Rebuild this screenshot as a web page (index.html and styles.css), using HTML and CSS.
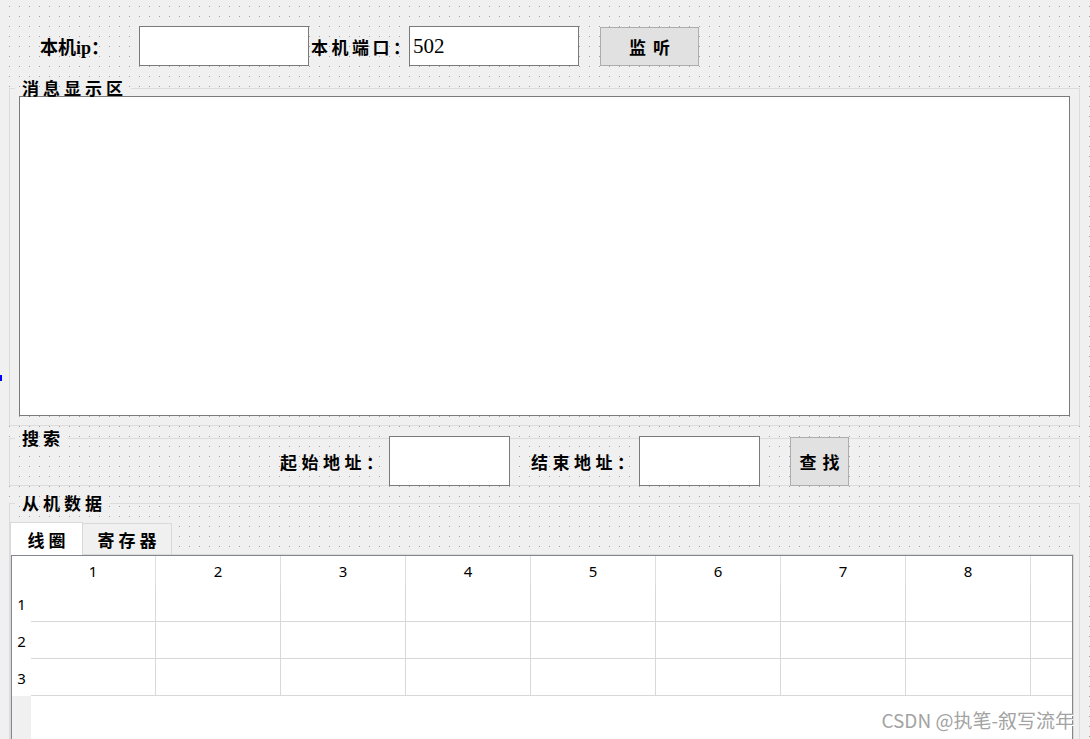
FILE: index.html
```html
<!DOCTYPE html>
<html>
<head>
  <meta charset="utf-8">
  <title>Modbus TCP 从机</title>
  <link rel="stylesheet" href="styles.css">
</head>
<body>
    <div class="top-row">
        <label class="ip-label">本机ip：</label>
        <input type="text" class="field wide">
        <label class="port-label">本机端口：</label>
        <input type="text" class="field wide" value="502">
        <button class="btn listen-btn">监听</button>
    </div>

    <fieldset class="group msg-group">
        <legend>消息显示区</legend>
        <textarea class="msg-box"></textarea>
    </fieldset>

    <fieldset class="group search-group">
        <legend>搜索</legend>
        <div class="search-row">
            <label class="addr-label">起始地址：</label>
            <input type="text" class="field short">
            <label class="addr-label end">结束地址：</label>
            <input type="text" class="field short">
            <button class="btn find-btn">查找</button>
        </div>
    </fieldset>

    <fieldset class="group data-group">
        <legend>从机数据</legend>
        <div class="tab-bar">
            <div class="tab active">线圈</div>
            <div class="tab second">寄存器</div>
        </div>
        <div class="tab-pane">
            <div class="table-box">
                <div class="grid">
                    <div class="corner"></div>
                    <div class="head">1</div><div class="head">2</div><div class="head">3</div>
                    <div class="head">4</div><div class="head">5</div><div class="head">6</div>
                    <div class="head">7</div><div class="head">8</div><div class="head"></div>

                    <div class="row-head">1</div>
                    <div class="cell"></div><div class="cell"></div><div class="cell"></div>
                    <div class="cell"></div><div class="cell"></div><div class="cell"></div>
                    <div class="cell"></div><div class="cell"></div><div class="cell"></div>

                    <div class="row-head">2</div>
                    <div class="cell"></div><div class="cell"></div><div class="cell"></div>
                    <div class="cell"></div><div class="cell"></div><div class="cell"></div>
                    <div class="cell"></div><div class="cell"></div><div class="cell"></div>

                    <div class="row-head">3</div>
                    <div class="cell"></div><div class="cell"></div><div class="cell"></div>
                    <div class="cell"></div><div class="cell"></div><div class="cell"></div>
                    <div class="cell"></div><div class="cell"></div><div class="cell"></div>
                </div>
            </div>
        </div>
    </fieldset>

    <div class="edge-mark"></div>
    <div class="watermark">CSDN @执笔-叙写流年</div>
</body>
</html>
```

FILE: styles.css
```css
* {
    box-sizing: border-box;
}
html, body {
    margin: 0;
    height: 100%;
    overflow: hidden;
}
body {
    position: relative;
    background-color: #f0f0f0;
    /* designer grid dots, 10px apart */
    background-image: conic-gradient(from 270deg at 1px 1px, #a0a0a0 90deg, transparent 0);
    background-size: 10px 10px;
    background-position: 9px 6px;
    font-family: "Noto Sans CJK SC", sans-serif;
    font-weight: 700;
    font-size: 17px;
    color: #000;
}

/* Top row */
.top-row {
    display: flex;
    align-items: center;
    height: 40px;
    margin-top: 26px;
    padding-left: 40px;
}
.ip-label {
    width: 99px;
    font-family: "Liberation Serif", "Noto Sans CJK SC", serif;
    font-size: 18px;
    white-space: nowrap;
}
.port-label {
    width: 98px;
    margin-left: 2px;
    letter-spacing: 3.5px;
    white-space: nowrap;
}
.field {
    height: 40px;
    margin: 0;
    padding: 0 3px;
    border: 1px solid #7a7a7a;
    background: #fff;
    font: 400 21px "Liberation Serif", serif;
    color: #000;
    outline: none;
}
.wide {
    width: 170px;
}
.short {
    width: 121px;
    height: 50px;
}
.btn {
    margin: 0;
    padding: 0;
    background: #e1e1e1;
    border: 1px solid #adadad;
    font: inherit;
    color: #000;
}
.listen-btn {
    width: 99px;
    height: 39px;
    margin-left: 21px;
    margin-top: 1px;
    align-self: flex-start;
    letter-spacing: 7px;
    text-indent: 7px;
}

/* Group boxes */
.group {
    margin: 0 10px 0 9px;
    padding: 0;
    min-width: 0;
    border: 1px solid #dcdcdc;
}
.group legend {
    margin-left: 5px;
    padding: 0 4px 0 7px;
    line-height: 16px;
    letter-spacing: 4px;
}
.msg-group {
    margin-top: 14px;
}
.msg-box {
    display: block;
    width: 1051px;
    height: 320px;
    margin: 0 0 9px 9px;
    border: 1px solid #7a7a7a;
    background: #fff;
    resize: none;
    outline: none;
}

.search-group {
    margin-top: 4px;
}
.search-row {
    display: flex;
    align-items: center;
    height: 50px;
    margin: -10px 0 -1px 0;
    padding-left: 270px;
}
.addr-label {
    width: 109px;
    letter-spacing: 4.5px;
    white-space: nowrap;
}
.addr-label.end {
    width: 108px;
    margin-left: 21px;
}
.find-btn {
    width: 59px;
    height: 49px;
    margin-left: 30px;
    margin-top: 1px;
    align-self: flex-start;
    letter-spacing: 6px;
    text-indent: 6px;
}

/* Tabs */
.data-group {
    margin-top: 9px;
}
.tab-bar {
    display: flex;
    align-items: flex-end;
    height: 32px;
    margin-top: 11px;
}
.tab {
    display: flex;
    align-items: center;
    justify-content: center;
    height: 31px;
    border: 1px solid #d9d9d9;
    border-bottom: none;
    background: #f0f0f0;
    letter-spacing: 4px;
    text-indent: 4px;
}
.tab.active {
    position: relative;
    z-index: 1;
    width: 73px;
    height: 33px;
    margin-bottom: -1px;
    background: #fff;
}
.tab.second {
    width: 89px;
    border-left: none;
}
.tab-pane {
    width: 1064px;
    border: 1px solid #d9d9d9;
}

/* Table */
.table-box {
    height: 200px;
    overflow: hidden;
    border: 1px solid #828790;
    background: linear-gradient(to right, #f0f0f0 19px, #fff 19px);
}
.grid {
    display: grid;
    grid-template-columns: 19px repeat(9, 125px);
    grid-template-rows: 29px repeat(3, 37px);
    width: max-content;
    font: 400 15px "Noto Sans", sans-serif;
}
.corner, .row-head {
    background: #fff;
}
.head, .row-head {
    display: flex;
    align-items: center;
    justify-content: center;
}
.head {
    background: #fff;
    border-right: 1px solid #dedede;
}
.cell {
    background: #fff;
    border-right: 1px solid #d8d8d8;
    border-bottom: 1px solid #d8d8d8;
}

/* Overlays */
.edge-mark {
    position: absolute;
    left: 0;
    top: 375px;
    width: 2px;
    height: 6px;
    background: #0000ff;
}
.watermark {
    position: absolute;
    right: 16px;
    bottom: 6px;
    font: 400 19px "Noto Sans CJK SC", sans-serif;
    color: #a3a3a3;
    text-shadow: 1px 1px 0 #fff;
}
```
